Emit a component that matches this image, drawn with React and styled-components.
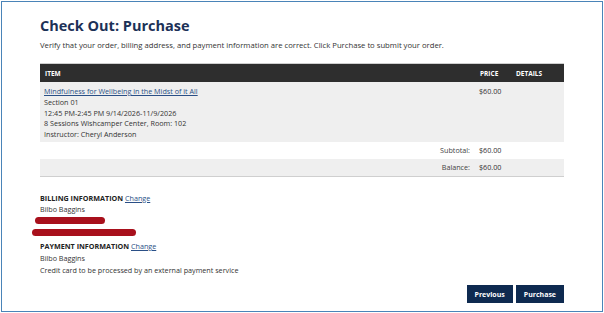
import styled, { createGlobalStyle } from "styled-components";

const GlobalStyle = createGlobalStyle`
  html, body {
    margin: 0;
    padding: 0;
    background: #ffffff;
  }
  body {
    font-family: "Open Sans", "Liberation Sans", sans-serif;
    color: #333333;
  }
`;

const items = [
  {
    title: "Mindfulness for Wellbeing in the Midst of it All",
    lines: [
      "Section 01",
      "12:45 PM-2:45 PM 9/14/2026-11/9/2026",
      "8 Sessions Wishcamper Center, Room: 102",
      "Instructor: Cheryl Anderson",
    ],
    price: "$60.00",
  },
];

export default function App() {
  return (
    <>
      <GlobalStyle />
      <Frame>
        <Titulo>Check Out: Purchase</Titulo>
        <Intro>
          Verify that your order, billing address, and payment information are correct. Click Purchase to submit your order.
        </Intro>

        <Tabela>
          <Cabecalho>
            <span>ITEM</span>
            <span>PRICE</span>
            <span>DETAILS</span>
          </Cabecalho>

          {items.map((item) => (
            <Linha key={item.title} $cinza $item>
              <Celula>
                <Link href="#">{item.title}</Link>
                {item.lines.map((l) => (
                  <div key={l}>{l}</div>
                ))}
              </Celula>
              <Celula>{item.price}</Celula>
              <Celula />
            </Linha>
          ))}

          <Linha>
            <Rotulo>Subtotal:</Rotulo>
            <Celula>$60.00</Celula>
            <Celula />
          </Linha>
          <Linha $cinza>
            <Rotulo>Balance:</Rotulo>
            <Celula>$60.00</Celula>
            <Celula />
          </Linha>
        </Tabela>

        <Secao>
          <SecaoTitulo>
            BILLING INFORMATION <Link href="#">Change</Link>
          </SecaoTitulo>
          <div>Bilbo Baggins</div>
          <Rabisco $largura={70} $recuo={-5} $topo={1} />
          <Rabisco $largura={104} $recuo={-8} $topo={5} />
        </Secao>

        <Secao $topo={5}>
          <SecaoTitulo>
            PAYMENT INFORMATION <Link href="#">Change</Link>
          </SecaoTitulo>
          <div>Bilbo Baggins</div>
          <div>Credit card to be processed by an external payment service</div>
        </Secao>

        <Botoes>
          <Botao>Previous</Botao>
          <Botao>Purchase</Botao>
        </Botoes>
      </Frame>
    </>
  );
}

const Frame = styled.div`
  box-sizing: border-box;
  width: 602px;
  height: 311px;
  margin: 1px 0 0 1px;
  border: 1.5px solid #4a84b8;
  padding: 13px 38px 0 38px;
  display: flex;
  flex-direction: column;
`;

const Titulo = styled.h1`
  margin: 0;
  font-size: 14.5px;
  font-weight: 700;
  color: #1c3157;
  line-height: 21px;
`;

const Intro = styled.p`
  margin: 4px 0 0 0;
  font-size: 7.7px;
  line-height: 11px;
  color: #333;
`;

const Tabela = styled.div`
  margin-top: 12px;
  width: 524px;
  border-top: 1px solid #cfcfcf;
  border-bottom: 1px solid #cfcfcf;
  font-size: 7.2px;
`;

const Cabecalho = styled.div`
  display: grid;
  grid-template-columns: 435px 36px 1fr;
  height: 18px;
  align-items: center;
  background: #2e2e2e;
  color: #ffffff;
  font-weight: 700;
  font-size: 6.5px;
  padding-left: 5px;
`;

const Linha = styled.div`
  display: grid;
  grid-template-columns: 435px 36px 1fr;
  background: ${(p) => (p.$cinza ? "#efefef" : "#ffffff")};
  padding: ${(p) => (p.$item ? "4px 0 2px 4px" : "3px 0 3px 4px")};
  line-height: 10.8px;
`;

const Celula = styled.div`
  color: #333;
`;

const Rotulo = styled.div`
  text-align: right;
  padding-right: 9px;
  color: #444;
`;

const Link = styled.a`
  color: #2a4f86;
  text-decoration: underline;
  font-weight: 400;
`;

const Secao = styled.div`
  margin-top: ${(p) => (p.$topo !== undefined ? `${p.$topo}px` : "16px")};
  font-size: 7.2px;
  line-height: 11.8px;
  color: #333;
`;

const SecaoTitulo = styled.div`
  font-weight: 700;
  color: #222;
`;

const Rabisco = styled.div`
  width: ${(p) => p.$largura}px;
  height: 7px;
  margin: ${(p) => p.$topo}px 0 0 ${(p) => p.$recuo}px;
  border-radius: 5px;
  background: #a8101c;
`;

const Botoes = styled.div`
  margin-top: auto;
  margin-bottom: 8px;
  display: flex;
  justify-content: flex-end;
  gap: 3px;
`;

const Botao = styled.button`
  background: #0e2a50;
  color: #ffffff;
  border: none;
  font-family: "Open Sans", "Liberation Sans", sans-serif;
  font-weight: 700;
  font-size: 7px;
  height: 18px;
  padding: 0 8px;
  cursor: pointer;
`;
